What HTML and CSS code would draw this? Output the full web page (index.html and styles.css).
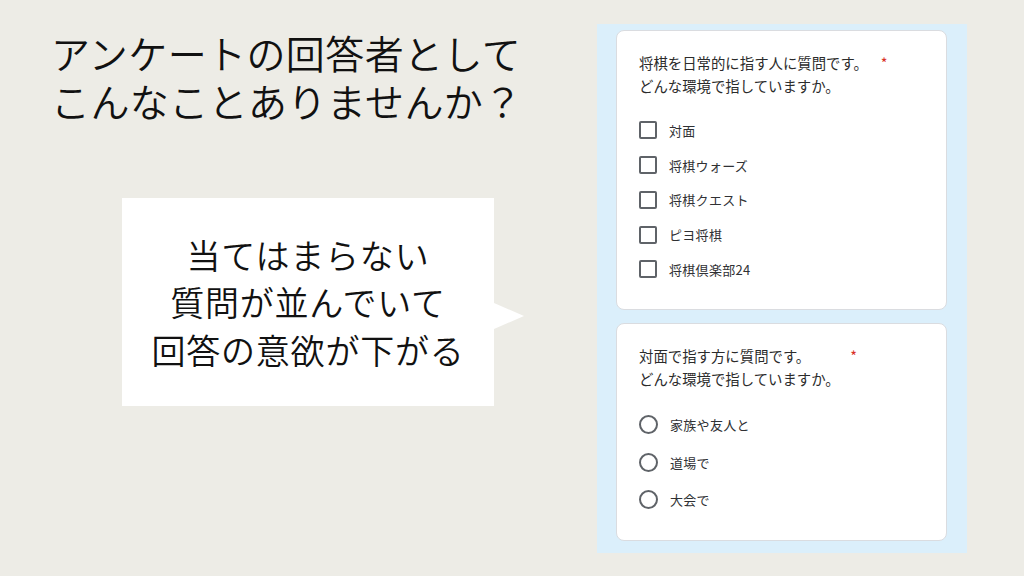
FILE: index.html
```html
<!DOCTYPE html>
<html lang="ja">
<head>
<meta charset="utf-8">
<link rel="stylesheet" href="styles.css">
</head>
<body>
<main class="slide">
  <section class="left">
    <h1 class="title"><span class="title-line">アンケートの回答者として</span><span class="title-line">こんなことありませんか？</span></h1>
    <div class="bubble">
      <p class="bubble-text">当てはまらない<br>質問が並んでいて<br>回答の意欲が下がる</p>
    </div>
  </section>
  <section class="panel">
    <div class="card card-check">
      <p class="question">将棋を日常的に指す人に質問です。<span class="req">*</span><br>どんな環境で指していますか。</p>
      <ul class="options">
        <li class="option"><span class="box"></span>対面</li>
        <li class="option"><span class="box"></span>将棋ウォーズ</li>
        <li class="option"><span class="box"></span>将棋クエスト</li>
        <li class="option"><span class="box"></span>ピヨ将棋</li>
        <li class="option"><span class="box"></span>将棋倶楽部24</li>
      </ul>
    </div>
    <div class="card card-radio">
      <p class="question">対面で指す方に質問です。<span class="req req-wide">*</span><br>どんな環境で指していますか。</p>
      <ul class="options">
        <li class="option"><span class="radio"></span>家族や友人と</li>
        <li class="option"><span class="radio"></span>道場で</li>
        <li class="option"><span class="radio"></span>大会で</li>
      </ul>
    </div>
  </section>
</main>
</body>
</html>
```
FILE: styles.css
```css
* { box-sizing: border-box; }
html, body { margin: 0; padding: 0; }
body {
  width: 1024px;
  height: 576px;
  overflow: hidden;
  background: #edece6;
  font-family: "Noto Sans CJK JP", "Noto Sans", sans-serif;
  color: #111;
}
.slide {
  display: flex;
  height: 576px;
}
.left {
  width: 597px;
  padding: 28px 0 0 51px;
}
.title {
  margin: 0;
  font-size: 39px;
  font-weight: 350;
  line-height: 49px;
  letter-spacing: 0.4px;
  color: #111;
}
.title-line {
  display: block;
  height: 48px;
}
.bubble {
  position: relative;
  margin: 74px 0 0 71px;
  width: 372px;
  height: 208px;
  background: #fff;
  display: flex;
  align-items: center;
  justify-content: center;
}
.bubble::after {
  content: "";
  position: absolute;
  left: 372px;
  top: 105px;
  border-left: 30px solid #fff;
  border-top: 13px solid transparent;
  border-bottom: 13px solid transparent;
}
.bubble-text {
  margin: 0;
  text-align: center;
  font-size: 34px;
  font-weight: 350;
  line-height: 47.5px;
  letter-spacing: 0.8px;
  color: #111;
}
.panel {
  margin-top: 24px;
  width: 370px;
  height: 529px;
  background: #dbeffb;
  padding: 6px 20px 0 19px;
  display: flex;
  flex-direction: column;
  gap: 13px;
}
.card {
  background: #fff;
  border: 1px solid #dadce0;
  border-radius: 8px;
  padding: 20px 22px 0 22px;
}
.card-check { height: 280px; }
.card-radio { height: 218px; }
.question {
  margin: 0;
  font-size: 14.4px;
  line-height: 23px;
  color: #2b2b2b;
}
.req {
  color: #d93025;
  margin-left: 13px;
}
.req-wide { margin-left: 40px; }
.options {
  list-style: none;
  margin: 0;
  padding: 0;
}
.card-check .options { margin-top: 16px; }
.card-radio .options { margin-top: 16px; }
.option {
  display: flex;
  align-items: center;
  gap: 12px;
  font-size: 13px;
  letter-spacing: 0.3px;
  color: #303134;
}
.card-check .option { height: 34.75px; }
.card-radio .option { height: 37.5px; }
.box {
  width: 18px;
  height: 18px;
  border: 2px solid #5f6368;
  border-radius: 2px;
  flex: none;
}
.radio {
  width: 19px;
  height: 19px;
  border: 2px solid #5f6368;
  border-radius: 50%;
  flex: none;
}
```
